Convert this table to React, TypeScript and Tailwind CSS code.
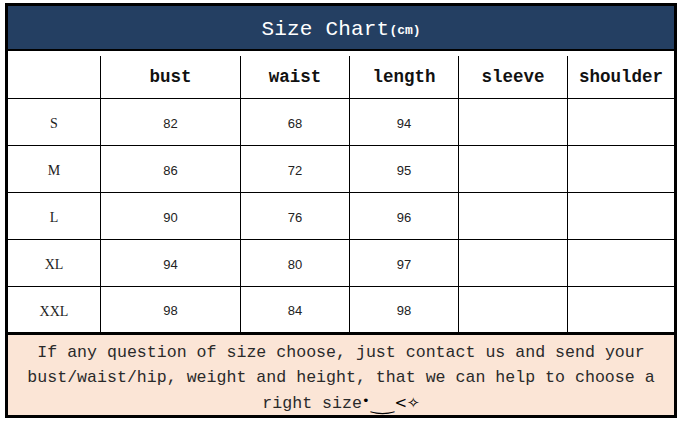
const sizes = [
  { s: "S", bust: "82", waist: "68", length: "94" },
  { s: "M", bust: "86", waist: "72", length: "95" },
  { s: "L", bust: "90", waist: "76", length: "96" },
  { s: "XL", bust: "94", waist: "80", length: "97" },
  { s: "XXL", bust: "98", waist: "84", length: "98" },
];

const cols = "grid grid-cols-[93px_140px_109px_109px_109px_106px]";

export default function App() {
  return (
    <div className="w-[683px] h-[424px] bg-white pt-[3px] pl-[5px] font-['Liberation_Mono',monospace]">
      <div className="w-[672px] border-[3px] border-black">
        {/* title */}
        <div className="h-[45px] bg-[#243f62] border-b-2 border-black flex items-center justify-center pt-[5px] text-white">
          <span className="text-[21px] tracking-[0.2px]">Size Chart</span>
          <span className="text-[13px] font-bold mt-[2px]">(cm)</span>
        </div>

        {/* column headings */}
        <div className={`${cols} h-[48px] border-b border-black pt-[5px] text-[17.5px] font-bold text-[#111]`}>
          <div className="border-r border-black" />
          <div className="border-r border-black flex items-center justify-center">bust</div>
          <div className="border-r border-black flex items-center justify-center">waist</div>
          <div className="border-r border-black flex items-center justify-center">length</div>
          <div className="border-r border-black flex items-center justify-center">sleeve</div>
          <div className="flex items-center justify-center">shoulder</div>
        </div>

        {sizes.map((r, i) => (
          <div
            key={r.s}
            className={`${cols} ${i < sizes.length - 1 ? "h-[47px] border-b border-black" : "h-[45px]"} text-[13px] text-[#222]`}
          >
            <div className="border-r border-black flex items-center justify-center pt-[3px] font-['Liberation_Serif',serif] text-[14px]">{r.s}</div>
            <div className="border-r border-black flex items-center justify-center pt-[3px] font-['Liberation_Sans',sans-serif]">{r.bust}</div>
            <div className="border-r border-black flex items-center justify-center pt-[3px] font-['Liberation_Sans',sans-serif]">{r.waist}</div>
            <div className="border-r border-black flex items-center justify-center pt-[3px] font-['Liberation_Sans',sans-serif]">{r.length}</div>
            <div className="border-r border-black" />
            <div />
          </div>
        ))}

        {/* note */}
        <div className="h-[83px] border-t-[3px] border-black bg-[#fbe5d6] flex items-center justify-center px-[18px] pt-[6px]">
          <p className="text-center text-[16.6px] leading-[25px] text-[#2a2a2a]">
            If any question of size choose, just contact us and send your bust/waist/hip, weight and height, that we can help to choose a right size
            <span className="font-['DejaVu_Sans',sans-serif] text-black">
              <span className="text-[13px] relative top-[-3px]">•</span>
              <span className="inline-block text-[16px] scale-x-[1.7] mx-[6px] relative top-[2px]">‿</span>
              <span className="text-[15px]">&lt;</span>
              <span className="text-[15px]">✧</span>
            </span>
          </p>
        </div>
      </div>
    </div>
  );
}
